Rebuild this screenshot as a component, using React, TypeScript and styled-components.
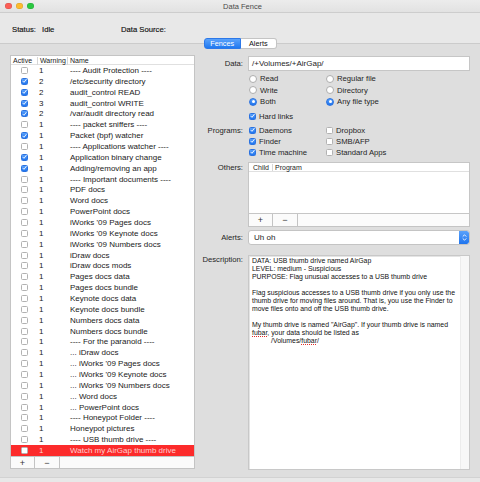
import React, { useState } from 'react'
import styled, { createGlobalStyle } from 'styled-components'

const GlobalStyle = createGlobalStyle`
  html, body { margin: 0; padding: 0; background: #e8e8e8; }
  body { font-family: "Liberation Sans", Arial, sans-serif; color: #1e1e1e; }
  * { box-sizing: border-box; }
`

type Fence = { active: boolean; warning: number; name: string }

const fences: Fence[] = [
    { active: false, warning: 1, name: '---- Audit Protection ----' },
    { active: true, warning: 2, name: '/etc/security directory' },
    { active: true, warning: 2, name: 'audit_control READ' },
    { active: true, warning: 3, name: 'audit_control WRITE' },
    { active: true, warning: 2, name: '/var/audit directory read' },
    { active: false, warning: 1, name: '---- packet sniffers ----' },
    { active: true, warning: 1, name: 'Packet (bpf) watcher' },
    { active: false, warning: 1, name: '---- Applications watcher ----' },
    { active: true, warning: 1, name: 'Application binary change' },
    { active: true, warning: 1, name: 'Adding/removing an app' },
    { active: false, warning: 1, name: '---- Important documents ----' },
    { active: false, warning: 1, name: 'PDF docs' },
    { active: false, warning: 1, name: 'Word docs' },
    { active: false, warning: 1, name: 'PowerPoint docs' },
    { active: false, warning: 1, name: "iWorks '09 Pages docs" },
    { active: false, warning: 1, name: "iWorks '09 Keynote docs" },
    { active: false, warning: 1, name: "iWorks '09 Numbers docs" },
    { active: false, warning: 1, name: 'iDraw docs' },
    { active: false, warning: 1, name: 'iDraw docs mods' },
    { active: false, warning: 1, name: 'Pages docs data' },
    { active: false, warning: 1, name: 'Pages docs bundle' },
    { active: false, warning: 1, name: 'Keynote docs data' },
    { active: false, warning: 1, name: 'Keynote docs bundle' },
    { active: false, warning: 1, name: 'Numbers docs data' },
    { active: false, warning: 1, name: 'Numbers docs bundle' },
    { active: false, warning: 1, name: '---- For the paranoid ----' },
    { active: false, warning: 1, name: '... iDraw docs' },
    { active: false, warning: 1, name: "... iWorks '09 Pages docs" },
    { active: false, warning: 1, name: "... iWorks '09 Keynote docs" },
    { active: false, warning: 1, name: "... iWorks '09 Numbers docs" },
    { active: false, warning: 1, name: '... Word docs' },
    { active: false, warning: 1, name: '... PowerPoint docs' },
    { active: false, warning: 1, name: '---- Honeypot Folder ----' },
    { active: false, warning: 1, name: 'Honeypot pictures' },
    { active: false, warning: 1, name: '---- USB thumb drive ----' },
    { active: false, warning: 1, name: 'Watch my AirGap thumb drive' },
]

const Window = styled.div`
    width: 480px;
    height: 482px;
    display: flex;
    flex-direction: column;
    background: #e8e8e8;
    overflow: hidden;
`

const TitleBar = styled.div`
    height: 13px;
    display: grid;
    grid-template-columns: 1fr auto 1fr;
    align-items: center;
    background: linear-gradient(#ececec, #e2e2e2);
    border-bottom: 1px solid #cdcdcd;
    padding-left: 5px;
`

const Lights = styled.div`
    display: flex;
    gap: 4.5px;
`

const Light = styled.span<{ color: string }>`
    width: 6.5px;
    height: 6.5px;
    border-radius: 50%;
    background: ${(p) => p.color};
    box-shadow: inset 0 0 0 0.5px rgba(0, 0, 0, 0.15);
`

const Title = styled.div`
    font-size: 7.5px;
    color: #4a4a4a;
`

const StatusBar = styled.div`
    height: 30px;
    display: grid;
    grid-template-columns: 30px 79px auto;
    align-items: center;
    padding: 2px 0 0 12px;
    font-size: 7.7px;
    color: #111;
    -webkit-text-stroke: 0.15px #111;
`

const TabBox = styled.div`
    flex: 1;
    display: flex;
    flex-direction: column;
    background: #dedede;
    border-top: 1px solid #cbcbcb;
    border-bottom: 1px solid #d2d2d2;
    margin-bottom: 4px;
`

const SegmentRow = styled.div`
    display: flex;
    justify-content: center;
    margin: -6px 0 0 1px;
`

const Segment = styled.button<{ selected: boolean }>`
    height: 11px;
    width: 36.5px;
    padding: 0;
    font-family: inherit;
    font-size: 7.3px;
    line-height: 9px;
    border: 1px solid ${(p) => (p.selected ? '#2c78e8' : '#c4c4c4')};
    color: ${(p) => (p.selected ? '#fff' : '#111')};
    background: ${(p) => (p.selected ? 'linear-gradient(#5aa2fb, #2079f0)' : '#fff')};
    &:first-child { border-radius: 3px 0 0 3px; }
    &:last-child { border-radius: 0 3px 3px 0; border-left: none; }
`

const Content = styled.div`
    flex: 1;
    display: grid;
    grid-template-columns: 185px 1fr;
    column-gap: 7px;
    padding: 6px 10px 0 10px;
`

/* left fence list */

const ListColumn = styled.div`
    display: flex;
    flex-direction: column;
`

const ListBox = styled.div`
    height: 402px;
    background: #fff;
    border: 1px solid #c4c4c4;
    overflow: hidden;
`

const ListHeader = styled.div`
    height: 9px;
    display: grid;
    grid-template-columns: 26px 30px 1fr;
    border-bottom: 1px solid #e0e0e0;
    font-size: 7px;
    line-height: 8px;
    color: #222;
`

const HeadCell = styled.div<{ divider?: boolean }>`
    padding-left: 2px;
    border-left: ${(p) => (p.divider ? '1px solid #d6d6d6' : 'none')};
    margin: 1px 0;
`

const Row = styled.div<{ selected: boolean }>`
    height: 10.87px;
    display: grid;
    grid-template-columns: 26px 30px 1fr;
    align-items: center;
    font-size: 8px;
    background: ${(p) => (p.selected ? '#fc2b2b' : 'transparent')};
    color: ${(p) => (p.selected ? '#ffd0d0' : '#1a1a1a')};
`

const CheckCell = styled.div`
    display: flex;
    justify-content: center;
`

const WarnCell = styled.div`
    padding-left: 2px;
`

const NameCell = styled.div`
    padding-left: 3px;
    white-space: nowrap;
`

const BoxButtons = styled.div<{ height: number }>`
    height: ${(p) => p.height}px;
    display: grid;
    grid-template-columns: 24px 25px 1fr;
    background: #fbfbfb;
    border: 1px solid #c4c4c4;
    border-top: none;
`

const BarButton = styled.div`
    display: flex;
    align-items: center;
    justify-content: center;
    border-right: 1px solid #c4c4c4;
    font-size: 9px;
    color: #333;
`

const BarFill = styled.div``

/* controls */

const Box = styled.span<{ checked: boolean }>`
    width: 7px;
    height: 7px;
    flex: none;
    display: inline-flex;
    align-items: center;
    justify-content: center;
    border-radius: 1.5px;
    border: 0.8px solid ${(p) => (p.checked ? '#2b72e0' : '#b2b2b2')};
    background: ${(p) => (p.checked ? 'linear-gradient(#58a0fb, #1f74ee)' : '#fff')};
`

function Check({ checked }: { checked: boolean }) {
    return (
        <Box checked={checked}>
            {checked && (
                <svg width="6" height="6" viewBox="0 0 6 6">
                    <path d="M1 3.2 L2.4 4.6 L5 1.2" fill="none" stroke="#fff" strokeWidth="1.1" strokeLinecap="round" strokeLinejoin="round" />
                </svg>
            )}
        </Box>
    )
}

const Circle = styled.span<{ checked: boolean }>`
    width: 8px;
    height: 8px;
    flex: none;
    border-radius: 50%;
    display: inline-flex;
    align-items: center;
    justify-content: center;
    border: 0.8px solid ${(p) => (p.checked ? '#2b72e0' : '#adadad')};
    background: ${(p) => (p.checked ? 'linear-gradient(#58a0fb, #1f74ee)' : '#fff')};
    &::after {
        content: '';
        width: 3px;
        height: 3px;
        border-radius: 50%;
        background: ${(p) => (p.checked ? '#fff' : 'transparent')};
    }
`

/* right form */

const Form = styled.div`
    display: flex;
    flex-direction: column;
    padding-top: 1px;
    font-size: 7.7px;
`

const FieldRow = styled.div<{ mt?: number }>`
    display: grid;
    grid-template-columns: 41px 1fr;
    column-gap: 5px;
    margin-top: ${(p) => p.mt ?? 0}px;
`

const Label = styled.div<{ top?: number }>`
    text-align: right;
    white-space: nowrap;
    padding-top: ${(p) => p.top ?? 0}px;
    align-self: ${(p) => (p.top !== undefined ? 'start' : 'center')};
`

const TextField = styled.div`
    height: 15px;
    background: #fff;
    border: 1px solid #c6c6c6;
    padding-left: 3px;
    display: flex;
    align-items: center;
    font-size: 8px;
`

const OptionGrid = styled.div`
    display: grid;
    grid-template-columns: 77px 1fr;
    padding-left: 1px;
`

const Option = styled.label<{ h: number }>`
    height: ${(p) => p.h}px;
    display: flex;
    align-items: center;
    gap: 3px;
    white-space: nowrap;
`

const OthersBox = styled.div`
    height: 52px;
    background: #fff;
    border: 1px solid #c6c6c6;
`

const OthersHeader = styled.div`
    height: 9px;
    display: flex;
    font-size: 7px;
    line-height: 8px;
    border-bottom: 1px solid #e0e0e0;
    padding-left: 2px;
`

const OthersHead = styled.div<{ divider?: boolean }>`
    padding: 0 2px;
    margin: 1px 0 0;
    border-left: ${(p) => (p.divider ? '1px solid #d6d6d6' : 'none')};
    width: ${(p) => (p.divider ? 'auto' : '21px')};
`

const Popup = styled.div`
    height: 15px;
    display: flex;
    align-items: center;
    justify-content: space-between;
    background: #fff;
    border: 1px solid #c4c4c4;
    border-radius: 3px;
    padding-left: 5px;
    font-size: 8px;
    overflow: hidden;
`

const Stepper = styled.div`
    width: 10px;
    height: 100%;
    display: flex;
    align-items: center;
    justify-content: center;
    background: linear-gradient(#5aa2fb, #1f74ee);
    border-radius: 0 2px 2px 0;
`

const DescBox = styled.div`
    height: 215px;
    display: grid;
    grid-template-columns: 1fr 9px;
    background: #fff;
    border: 1px solid #c8c8c8;
    box-shadow: inset 1px 1px 0 #e4e4e4;
`

const DescText = styled.div`
    padding: 1px 0 0 3px;
    font-size: 6.9px;
    color: #111;
`

const DescLine = styled.div<{ indent?: number }>`
    height: 8px;
    line-height: 8px;
    white-space: nowrap;
    padding-left: ${(p) => p.indent ?? 0}px;
`

const Misspelled = styled.span`
    text-decoration: underline dotted #e0302a;
    text-underline-offset: 1px;
`

const ScrollTrack = styled.div`
    background: #f7f7f7;
    border-left: 1px solid #ececec;
`

const descLines = [
    'DATA: USB thumb drive named AirGap',
    'LEVEL: medium - Suspicious',
    'PURPOSE: Flag unusual accesses to a USB thumb drive',
    '',
    'Flag suspicious accesses to a USB thumb drive if you only use the',
    'thumb drive for moving files around. That is, you use the Finder to',
    'move files onto and off the USB thumb drive.',
    '',
    'My thumb drive is named "AirGap". If your thumb drive is named',
]

export default function App() {
    const [tab, setTab] = useState('fences')

    return (
        <>
            <GlobalStyle />
            <Window>
                <TitleBar>
                    <Lights>
                        <Light color="#fc5f57" />
                        <Light color="#fdbb2e" />
                        <Light color="#2ac840" />
                    </Lights>
                    <Title>Data Fence</Title>
                    <div />
                </TitleBar>
                <StatusBar>
                    <span>Status:</span>
                    <span>Idle</span>
                    <span>Data Source:</span>
                </StatusBar>
                <TabBox>
                    <SegmentRow>
                        <Segment selected={tab === 'fences'} onClick={() => setTab('fences')}>Fences</Segment>
                        <Segment selected={tab === 'alerts'} onClick={() => setTab('alerts')}>Alerts</Segment>
                    </SegmentRow>
                    <Content>
                        <ListColumn>
                            <ListBox>
                                <ListHeader>
                                    <HeadCell>Active</HeadCell>
                                    <HeadCell divider>Warning</HeadCell>
                                    <HeadCell divider>Name</HeadCell>
                                </ListHeader>
                                {fences.map((f, i) => (
                                    <Row key={i} selected={i === fences.length - 1}>
                                        <CheckCell><Check checked={f.active} /></CheckCell>
                                        <WarnCell>{f.warning}</WarnCell>
                                        <NameCell>{f.name}</NameCell>
                                    </Row>
                                ))}
                            </ListBox>
                            <BoxButtons height={12}>
                                <BarButton>+</BarButton>
                                <BarButton>−</BarButton>
                                <BarFill />
                            </BoxButtons>
                        </ListColumn>

                        <Form>
                            <FieldRow>
                                <Label>Data:</Label>
                                <TextField>/+Volumes/+AirGap/</TextField>
                            </FieldRow>

                            <FieldRow mt={2}>
                                <div />
                                <OptionGrid>
                                    <Option h={11.5}><Circle checked={false} />Read</Option>
                                    <Option h={11.5}><Circle checked={false} />Regular file</Option>
                                    <Option h={11.5}><Circle checked={false} />Write</Option>
                                    <Option h={11.5}><Circle checked={false} />Directory</Option>
                                    <Option h={11.5}><Circle checked />Both</Option>
                                    <Option h={11.5}><Circle checked />Any file type</Option>
                                </OptionGrid>
                            </FieldRow>

                            <FieldRow mt={3}>
                                <div />
                                <OptionGrid>
                                    <Option h={11}><Check checked />Hard links</Option>
                                </OptionGrid>
                            </FieldRow>

                            <FieldRow mt={3}>
                                <Label top={1}>Programs:</Label>
                                <OptionGrid>
                                    <Option h={11}><Check checked />Daemons</Option>
                                    <Option h={11}><Check checked={false} />Dropbox</Option>
                                    <Option h={11}><Check checked />Finder</Option>
                                    <Option h={11}><Check checked={false} />SMB/AFP</Option>
                                    <Option h={11}><Check checked />Time machine</Option>
                                    <Option h={11}><Check checked={false} />Standard Apps</Option>
                                </OptionGrid>
                            </FieldRow>

                            <FieldRow mt={4}>
                                <Label top={1}>Others:</Label>
                                <div>
                                    <OthersBox>
                                        <OthersHeader>
                                            <OthersHead>Child</OthersHead>
                                            <OthersHead divider>Program</OthersHead>
                                        </OthersHeader>
                                    </OthersBox>
                                    <BoxButtons height={13}>
                                        <BarButton>+</BarButton>
                                        <BarButton>−</BarButton>
                                        <BarFill />
                                    </BoxButtons>
                                </div>
                            </FieldRow>

                            <FieldRow mt={3}>
                                <Label>Alerts:</Label>
                                <Popup>
                                    <span>Uh oh</span>
                                    <Stepper>
                                        <svg width="5" height="9" viewBox="0 0 5 9">
                                            <path d="M1 3.3 L2.5 1.8 L4 3.3 M1 5.7 L2.5 7.2 L4 5.7" fill="none" stroke="#fff" strokeWidth="0.9" strokeLinecap="round" strokeLinejoin="round" />
                                        </svg>
                                    </Stepper>
                                </Popup>
                            </FieldRow>

                            <FieldRow mt={10}>
                                <Label top={0}>Description:</Label>
                                <DescBox>
                                    <DescText>
                                        {descLines.map((line, i) => (
                                            <DescLine key={i}>{line}</DescLine>
                                        ))}
                                        <DescLine>
                                            <Misspelled>fubar</Misspelled>, your data should be listed as
                                        </DescLine>
                                        <DescLine indent={19}>
                                            /Volumes/<Misspelled>fubar</Misspelled>/
                                        </DescLine>
                                    </DescText>
                                    <ScrollTrack />
                                </DescBox>
                            </FieldRow>
                        </Form>
                    </Content>
                </TabBox>
            </Window>
        </>
    )
}
